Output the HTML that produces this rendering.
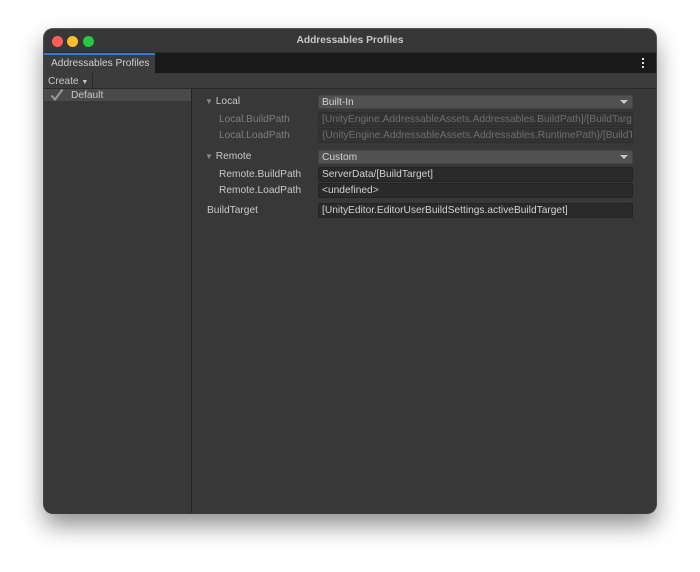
<!DOCTYPE html>
<html><head><style>
*{margin:0;padding:0;box-sizing:border-box}
body{width:700px;height:572px;background:#fff;font-family:"Liberation Sans",sans-serif;font-size:10.2px;position:relative;overflow:hidden}
.win{position:absolute;left:44px;top:29px;width:612px;height:484px;background:#383838;border-radius:9px;overflow:hidden;box-shadow:0 12px 24px rgba(0,0,0,.45),0 0 0 1px #5a5a5a}
.title{height:24px;background:#373737;text-align:center;color:#c8c8c8;font-weight:bold;font-size:10.2px;line-height:24px;border-bottom:1px solid #2a2a2a}
.dot{position:absolute;top:7px;width:11px;height:11px;border-radius:50%}
.tabbar{position:absolute;top:24px;left:0;right:0;height:20px;background:#191919}
.tab{position:absolute;left:0;top:0;width:111px;height:20px;background:#3c3c3c;border-top:2px solid #3a7ad0;color:#d0d0d0;line-height:18px;padding-left:7px}
.tb{position:absolute;top:44px;left:0;right:0;height:16px;background:#3c3c3c;border-bottom:1px solid #2a2a2a;color:#c8c8c8;line-height:17px;padding-left:4px}
.left{position:absolute;top:60px;left:0;width:148px;bottom:0;border-right:1px solid #232323}
.sel{position:absolute;top:0;left:0;right:0;height:12px;background:#4a4a4a;color:#c8c8c8;line-height:13px;padding-left:27px}
.t{position:absolute;color:#c8c8c8;white-space:nowrap}
.g{color:#7e7e7e}
.box{position:absolute;left:274px;width:315px;background:#2a2a2a;border:1px solid #232323;border-radius:2px;color:#d2d2d2;padding-left:3px;white-space:nowrap;overflow:hidden;line-height:13px}
.dd{background:#515151;border-color:#444}
.dis{color:#6e6e6e;background:#333;border-color:#2e2e2e}
.arr{position:absolute;right:4px;top:4px;width:0;height:0;border-left:4px solid transparent;border-right:4px solid transparent;border-top:4px solid #c8c8c8}
</style></head><body>
<div class="win">
 <div class="title">Addressables Profiles</div>
 <div class="dot" style="left:8px;background:#fe5f57"></div>
 <div class="dot" style="left:23px;background:#febc2e"></div>
 <div class="dot" style="left:39px;background:#28c840"></div>
 <div class="tabbar"><div class="tab">Addressables Profiles</div>
  <div style="position:absolute;right:12px;top:5px;width:2px;height:10px;border-top:2px dotted #ddd;border-bottom:2px dotted #ddd;background:linear-gradient(#ddd,#ddd) center/2px 2px no-repeat"></div></div>
 <div class="tb">Create <span style="font-size:7px">▼</span><span style="position:absolute;left:48px;top:0;height:16px;border-left:1px solid #2a2a2a"></span></div>
 <div class="left"><div class="sel"><svg style="position:absolute;left:6px;top:0" width="14" height="12" viewBox="0 0 14 12"><path d="M1.5 6.5 L5 10.5 L12.5 0.5" fill="none" stroke="#9a9a9a" stroke-width="2"/></svg>Default</div></div>
 <div class="t" style="left:161px;top:67px"><span style="font-size:8px;color:#888">▼</span> Local</div>
 <div class="box dd" style="top:66px;height:14px;line-height:13px">Built-In<div class="arr"></div></div>
 <div class="t g" style="left:175px;top:85px">Local.BuildPath</div>
 <div class="box dis" style="top:83px;height:15px">[UnityEngine.AddressableAssets.Addressables.BuildPath]/[BuildTarget]</div>
 <div class="t g" style="left:175px;top:101px">Local.LoadPath</div>
 <div class="box dis" style="top:99px;height:15px">{UnityEngine.AddressableAssets.Addressables.RuntimePath}/[BuildTarget]</div>
 <div class="t" style="left:161px;top:122px"><span style="font-size:8px;color:#888">▼</span> Remote</div>
 <div class="box dd" style="top:121px;height:14px">Custom<div class="arr"></div></div>
 <div class="t" style="left:175px;top:140px">Remote.BuildPath</div>
 <div class="box" style="top:138px;height:15px">ServerData/[BuildTarget]</div>
 <div class="t" style="left:175px;top:156px">Remote.LoadPath</div>
 <div class="box" style="top:154px;height:15px">&lt;undefined&gt;</div>
 <div class="t" style="left:163px;top:176px">BuildTarget</div>
 <div class="box" style="top:174px;height:15px">[UnityEditor.EditorUserBuildSettings.activeBuildTarget]</div>
</div>
</body></html>
